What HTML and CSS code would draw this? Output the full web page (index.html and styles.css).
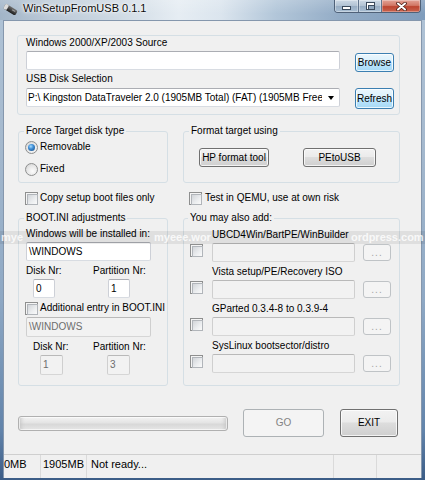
FILE: index.html
```html
<!DOCTYPE html>
<html lang="en">
<head>
<meta charset="utf-8">
<title>WinSetupFromUSB 0.1.1</title>
<link rel="stylesheet" href="styles.css">
</head>
<body>
<div class="window">
  <header class="titlebar">
    <svg class="app-icon" width="15" height="13" viewBox="0 0 15 13">
      <defs>
        <linearGradient id="usbBody" x1="0" y1="0" x2="0" y2="1">
          <stop offset="0" stop-color="#707070"/>
          <stop offset="1" stop-color="#1c1c1c"/>
        </linearGradient>
      </defs>
      <g transform="rotate(32 7.5 6.5)">
        <rect x="0.5" y="3.8" width="14" height="5.6" rx="1.8" fill="url(#usbBody)"/>
        <rect x="0.5" y="3.8" width="3.8" height="5.6" rx="1.3" fill="#dcdcdc"/>
        <rect x="9" y="5.2" width="3.6" height="1.1" fill="#9a9a9a"/>
      </g>
    </svg>
    <span class="title">WinSetupFromUSB 0.1.1</span>
    <div class="caption-buttons">
      <span class="cap-btn cap-min"><span class="glyph-min"></span></span>
      <span class="cap-btn cap-max"><span class="glyph-max"></span></span>
      <span class="cap-btn cap-close">
        <svg width="11" height="9" viewBox="0 0 11 9">
          <path d="M2 1.5 L9 7.5 M9 1.5 L2 7.5" stroke="#4b1e16" stroke-width="3.6" stroke-linecap="round"/>
          <path d="M2 1.5 L9 7.5 M9 1.5 L2 7.5" stroke="#ffffff" stroke-width="2" stroke-linecap="round"/>
        </svg>
      </span>
    </div>
  </header>

  <div class="body-row">
    <div class="client">
      <main class="content">
        <section class="group source-group">
          <div class="source-grid">
            <div class="label span-all">Windows 2000/XP/2003 Source</div>
            <div class="textbox source-input"></div>
            <button class="btn btn-hot side-btn browse">Browse</button>
            <div class="label span-all">USB Disk Selection</div>
            <div class="combo">
              <span class="combo-text">P:\ Kingston DataTraveler 2.0 (1905MB Total) (FAT) (1905MB Free</span>
              <span class="combo-arrow"></span>
            </div>
            <button class="btn btn-hot side-btn refresh">Refresh</button>
          </div>
        </section>

        <div class="row-groups row-top">
          <fieldset class="gb gb-left force-group">
            <legend>Force Target disk type</legend>
            <label class="radio-row"><span class="radio checked"></span>Removable</label>
            <label class="radio-row second"><span class="radio"></span>Fixed</label>
          </fieldset>
          <fieldset class="gb gb-right format-group">
            <legend>Format target using</legend>
            <div class="format-buttons">
              <button class="btn hp-btn">HP format tool</button>
              <button class="btn pe-btn">PEtoUSB</button>
            </div>
          </fieldset>
        </div>

        <div class="check-row">
          <label class="check-item left-check"><span class="checkbox"></span>Copy setup boot files only</label>
          <label class="check-item right-check"><span class="checkbox"></span>Test in QEMU, use at own risk</label>
        </div>

        <div class="row-groups row-bottom">
          <fieldset class="gb gb-left boot-group">
            <legend>BOOT.INI adjustments</legend>
            <div class="label">Windows will be installed in:</div>
            <div class="textbox path-input">\WINDOWS</div>
            <div class="nr-grid first-nr">
              <div class="label">Disk Nr:</div>
              <div class="label">Partition Nr:</div>
              <div class="textbox nr-input disk">0</div>
              <div class="textbox nr-input part">1</div>
            </div>
            <label class="check-item extra-entry"><span class="checkbox"></span>Additional entry in BOOT.INI</label>
            <div class="textbox path-input disabled second-path">\WINDOWS</div>
            <div class="nr-grid second-nr">
              <div class="label disk-label">Disk Nr:</div>
              <div class="label">Partition Nr:</div>
              <div class="textbox nr-input disabled disk">1</div>
              <div class="textbox nr-input disabled part">3</div>
            </div>
          </fieldset>

          <fieldset class="gb gb-right extras-group">
            <legend>You may also add:</legend>
            <div class="extras-list">
              <div class="extra-item">
                <div class="label">UBCD4Win/BartPE/WinBuilder</div>
                <span class="checkbox"></span>
                <div class="textbox disabled extra-input"></div>
                <button class="btn btn-disabled dots">...</button>
              </div>
              <div class="extra-item">
                <div class="label">Vista setup/PE/Recovery ISO</div>
                <span class="checkbox"></span>
                <div class="textbox disabled extra-input"></div>
                <button class="btn btn-disabled dots">...</button>
              </div>
              <div class="extra-item">
                <div class="label">GParted 0.3.4-8 to 0.3.9-4</div>
                <span class="checkbox"></span>
                <div class="textbox disabled extra-input"></div>
                <button class="btn btn-disabled dots">...</button>
              </div>
              <div class="extra-item">
                <div class="label">SysLinux bootsector/distro</div>
                <span class="checkbox"></span>
                <div class="textbox disabled extra-input"></div>
                <button class="btn btn-disabled dots">...</button>
              </div>
            </div>
          </fieldset>
        </div>

        <div class="action-row">
          <div class="progress"></div>
          <button class="btn btn-disabled go-btn">GO</button>
          <button class="btn exit-btn">EXIT</button>
        </div>
      </main>

      <footer class="statusbar">
        <div class="panel p1">0MB</div>
        <div class="panel p2">1905MB</div>
        <div class="panel p3">Not ready...</div>
        <div class="panel p4"></div>
        <div class="panel p5"></div>
      </footer>
    </div>
  </div>

  <div class="watermark" aria-hidden="true">
    <span class="wm wm-a">mye</span>
    <span class="wm wm-b">myeee.wor</span>
    <span class="wm wm-c">ordpress.com</span>
  </div>
</div>
</body>
</html>
```

FILE: styles.css
```css
* { box-sizing: border-box; }

html, body {
  margin: 0;
  padding: 0;
}

body {
  width: 425px;
  height: 480px;
  overflow: hidden;
  font-family: "Liberation Sans", Arial, sans-serif;
  font-size: 10px;
  line-height: 14px;
  color: #000;
  background: #5a7aa0;
}

.window {
  position: relative;
  width: 425px;
  height: 480px;
  display: flex;
  flex-direction: column;
  background: linear-gradient(180deg, #b0c3d6 0px, #a5b9ce 140px, #8ea8c4 300px, #6284ab 430px, #3b5c86 480px);
}

/* ---------- title bar ---------- */
.titlebar {
  flex: none;
  height: 20px;
  display: flex;
  align-items: flex-start;
  padding-left: 3px;
  background:
    linear-gradient(180deg, rgba(255,255,255,0.18), rgba(255,255,255,0) 70%),
    linear-gradient(90deg, #a2b5c8 0%, #bccad8 12%, #cfdae4 28%, #e6edf3 42%, #dbe5ee 52%, #b2c6d9 65%, #93acc6 80%, #7f9cbc 100%);
}

.app-icon {
  flex: none;
  margin-top: 3px;
}

.title {
  margin-left: 5px;
  margin-top: 1px;
  font-size: 11px;
  line-height: 14px;
  color: #0a0a0a;
  white-space: nowrap;
  text-shadow: 0 0 6px #fff, 0 0 3px #fff, 0 0 1px #fff;
}

.caption-buttons {
  margin-left: auto;
  margin-right: 4px;
  display: flex;
  height: 13px;
  border: 1px solid #4f6178;
  border-top: none;
  border-radius: 0 0 4px 4px;
  overflow: hidden;
}

.cap-btn {
  display: flex;
  align-items: center;
  justify-content: center;
}

.cap-min, .cap-max {
  background: linear-gradient(180deg, #cdd9e5 0%, #b2c3d4 48%, #98adc3 52%, #a9bfd4 100%);
  border-right: 1px solid #61758d;
  box-shadow: inset 0 0 0 1px rgba(255,255,255,0.35);
}

.cap-min { width: 24px; }
.cap-max { width: 23px; }

.cap-close {
  width: 38px;
  background: linear-gradient(180deg, #e3a396 0%, #d27866 45%, #bd4530 55%, #c8644f 100%);
  box-shadow: inset 0 0 0 1px rgba(255,255,255,0.3);
}

.glyph-min {
  width: 9px;
  height: 4px;
  margin-top: 4px;
  background: #fff;
  border: 1px solid #3b4a5c;
}

.glyph-max {
  width: 9px;
  height: 8px;
  border: 1px solid #3b4a5c;
  background: #fff;
  position: relative;
}

.glyph-max::after {
  content: "";
  position: absolute;
  left: 1px;
  top: 2px;
  width: 5px;
  height: 3px;
  background: #8fa6bd;
  border: 1px solid #3b4a5c;
}

/* ---------- frame + client ---------- */
.body-row {
  flex: 1;
  display: flex;
  padding: 0 3px 2px 3px;
}

.client {
  flex: 1;
  display: flex;
  flex-direction: column;
  background: #f0f0f0;
  border: 1px solid #8597ad;
  border-bottom: none;
}

.content {
  flex: 1;
  display: flex;
  flex-direction: column;
  padding: 14px 0 0 13px;
}

.label {
  line-height: 14px;
  white-space: nowrap;
}

/* ---------- generic controls ---------- */
.textbox {
  height: 19px;
  background: #fff;
  border: 1px solid;
  border-color: #abadb3 #cdd0d7 #d8dce2 #cdd0d7;
  border-radius: 2px;
  padding-left: 2px;
  line-height: 17px;
  white-space: nowrap;
  overflow: hidden;
}

.textbox.disabled {
  background: #f2f2f2;
  border-color: #b9b9b9 #cfcfcf #d6d6d6 #cfcfcf;
  color: #6d6d6d;
}

.btn {
  font: inherit;
  color: #000;
  padding: 0;
  margin: 0;
  border: 1px solid #707070;
  border-radius: 3px;
  background: linear-gradient(180deg, #f2f2f2 0%, #ebebeb 46%, #dddddd 50%, #cfcfcf 100%);
  box-shadow: inset 0 0 0 1px rgba(255,255,255,0.75);
  line-height: 14px;
  text-align: center;
  white-space: nowrap;
}

.btn-hot {
  border-color: #3c7fb1;
  background: linear-gradient(180deg, #eaf6fd 0%, #d9f0fc 46%, #bee6fd 50%, #a7d9f5 100%);
}

.btn-disabled {
  border-color: #adb2b5;
  background: #f4f4f4;
  color: #838383;
  box-shadow: none;
}

.checkbox {
  flex: none;
  position: relative;
  width: 13px;
  height: 13px;
  border: 1px solid #8e8f8f;
  background: #f4f4f4;
}

.checkbox::after {
  content: "";
  position: absolute;
  left: 1px;
  top: 1px;
  width: 9px;
  height: 9px;
  border: 1px solid #b1b5ba;
  background: linear-gradient(135deg, #d2d5d9 0%, #eceef0 60%, #fafafa 100%);
}

.radio {
  flex: none;
  width: 13px;
  height: 13px;
  border-radius: 50%;
  border: 1px solid #8e8f8f;
  background: radial-gradient(circle at 60% 65%, #fcfcfc 0%, #e6e6e6 55%, #cbcbcb 100%);
  display: inline-flex;
  align-items: center;
  justify-content: center;
}

.radio.checked::after {
  content: "";
  width: 7px;
  height: 7px;
  border-radius: 50%;
  background: radial-gradient(circle at 40% 35%, #a6dcff 0%, #3f8ed6 40%, #17467a 100%);
}

/* ---------- source group ---------- */
.group {
  border: 1px solid #d5dfe5;
  border-radius: 3px;
}

.source-group {
  width: 383px;
  padding: 0 5px 5px 8px;
}

.source-grid {
  display: grid;
  grid-template-columns: 314px 39px;
  column-gap: 15px;
  align-items: start;
}

.span-all { grid-column: 1 / -1; }

.source-input { margin-top: 1px; }

.side-btn { width: 39px; }
.browse { height: 19px; margin-top: 3px; }
.refresh { height: 21px; margin-top: 2px; }

.combo {
  margin-top: 2px;
  height: 19px;
  display: flex;
  align-items: center;
  background: #fff;
  border: 1px solid;
  border-color: #abadb3 #cdd0d7 #d8dce2 #cdd0d7;
  border-radius: 2px;
}

.combo-text {
  flex: 1;
  min-width: 0;
  overflow: hidden;
  white-space: nowrap;
  padding-left: 1px;
}

.combo-arrow {
  flex: none;
  width: 17px;
  height: 17px;
  display: flex;
  align-items: center;
  justify-content: center;
}

.combo-arrow::after {
  content: "";
  width: 0;
  height: 0;
  margin-left: 1px;
  border-left: 3.5px solid transparent;
  border-right: 3.5px solid transparent;
  border-top: 4px solid #000;
}

/* ---------- fieldsets ---------- */
.row-groups {
  display: flex;
  gap: 15px;
  margin-left: 1px;
}

.row-top { margin-top: 9px; }
.row-bottom { margin-top: 6px; }

.gb {
  margin: 0;
  min-width: 0;
  border: 1px solid #d5dfe5;
  border-radius: 3px;
  padding: 0 0 0 7px;
}

.gb-left { width: 150px; }
.gb-right { width: 217px; }

legend {
  padding: 0 2px;
  margin-left: -2px;
  line-height: 14px;
  font-size: 10px;
}

.force-group { padding-top: 2px; padding-bottom: 6px; }

.radio-row {
  display: flex;
  align-items: center;
  gap: 2px;
  height: 14px;
  margin-left: -1px;
}

.radio-row.second { margin-top: 8px; }

.format-buttons {
  display: flex;
  gap: 34px;
  padding: 10px 0 0 8px;
}

.hp-btn { width: 70px; height: 19px; }
.pe-btn { width: 73px; height: 19px; }

/* ---------- checkbox row ---------- */
.check-row {
  display: grid;
  grid-template-columns: 150px 217px;
  column-gap: 15px;
  margin-top: 8px;
  margin-left: 1px;
}

.check-item {
  display: flex;
  align-items: center;
  gap: 2px;
  height: 14px;
  white-space: nowrap;
}

.left-check { padding-left: 7px; }
.right-check { padding-left: 6px; gap: 3px; }

/* ---------- BOOT.INI group ---------- */
.boot-group { padding: 2px 0 10px 7px; }

.path-input {
  width: 125px;
  margin-top: 1px;
}

.second-path { margin-top: 2px; height: 20px; line-height: 18px; }

.nr-grid {
  display: grid;
  grid-template-columns: 67px auto;
  margin-top: 3px;
}

.nr-input {
  margin-top: 1px;
  width: 22px;
}

.first-nr .disk { margin-left: 7px; }
.first-nr .part { margin-left: 15px; }

.second-nr .disk-label { padding-left: 7px; }
.second-nr .nr-input { width: 23px; height: 20px; line-height: 18px; }
.second-nr .disk { margin-left: 14px; }
.second-nr .part { margin-left: 14px; }

.extra-entry { margin-top: 3px; margin-left: -1px; }

/* ---------- extras group ---------- */
.extras-group { padding: 3px 0 0 6px; }

.extras-list {
  display: flex;
  flex-direction: column;
  gap: 3px;
}

.extra-item {
  display: grid;
  grid-template-columns: 22px 143px 36px;
  align-items: start;
}

.extra-item .label { grid-column: 2 / 4; }
.extra-item .checkbox { grid-column: 1; margin-top: 2px; }
.extra-input { grid-column: 2; margin-top: 1px; }

.dots {
  grid-column: 3;
  justify-self: end;
  width: 28px;
  height: 17px;
  margin-top: 2px;
  color: #a5a5a5;
  letter-spacing: 1px;
  line-height: 12px;
  border-color: #bfc3c6;
}

/* ---------- actions ---------- */
.action-row {
  display: flex;
  align-items: center;
  height: 28px;
  margin-top: 23px;
}

.progress {
  width: 210px;
  height: 15px;
  margin-left: 1px;
  border: 1px solid #b0b0b0;
  border-radius: 3px;
  background: linear-gradient(180deg, #f3f3f3 0%, #e4e4e4 45%, #d8d8d8 55%, #e6e6e6 100%);
  box-shadow: inset 0 0 0 1px rgba(255,255,255,0.6), inset 6px 0 4px -4px #c4c4c4, inset -6px 0 4px -4px #c4c4c4;
}

.go-btn {
  width: 81px;
  height: 28px;
  margin-left: 15px;
}

.exit-btn {
  width: 58px;
  height: 28px;
  margin-left: 16px;
}

/* ---------- status bar ---------- */
.statusbar {
  flex: none;
  height: 24px;
  display: flex;
  border-top: 1px solid #cfcfcf;
  font-size: 11px;
  line-height: 14px;
  background: #f0f0f0;
}

.panel {
  padding-top: 2px;
  border-right: 1px solid #dadada;
  white-space: nowrap;
}

.p1 { width: 37px; padding-left: 0; }
.p2 { width: 46px; padding-left: 2px; }
.p3 { width: 247px; padding-left: 4px; }
.p4 { width: 43px; }
.p5 { flex: 1; border-right: none; }

/* ---------- watermark overlay (visible fragments only) ---------- */
.watermark {
  position: absolute;
  left: 0;
  right: 0;
  top: 231px;
  height: 13px;
  display: flex;
  background: rgba(0, 0, 0, 0.07);
  font-size: 11px;
  font-weight: bold;
  line-height: 13px;
  color: rgba(255, 255, 255, 0.8);
  pointer-events: none;
  white-space: nowrap;
}

.wm { flex: none; }
.wm-a { margin-left: 1px; }
.wm-b { margin-left: 131px; }
.wm-c { margin-left: 140px; }
```
